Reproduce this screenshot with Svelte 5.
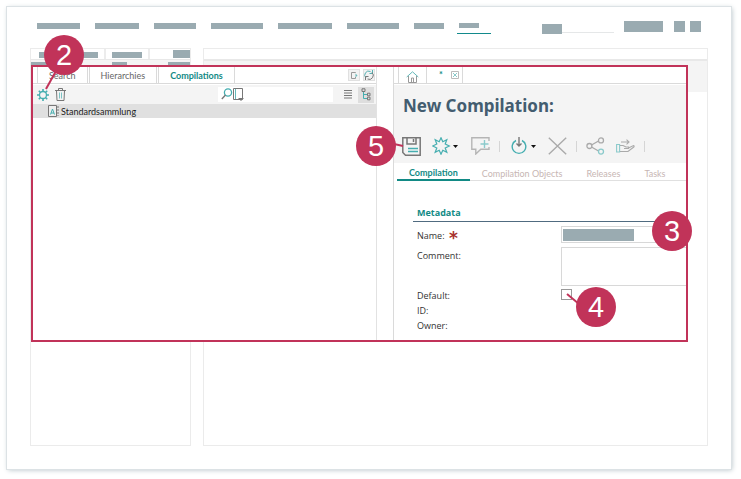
<script>
    const navItems = [43, 44, 42, 52, 54, 52, 30];
    const treeTabs = ["Search", "Hierarchies", "Compilations"];
    const detailTabs = ["Compilation", "Compilation Objects", "Releases", "Tasks"];

    let activeTree = "Compilations";
    let activeDetail = "Compilation";
    let comment = "";
    let isDefault = false;
</script>

<div class="page">
    <header class="nav">
        {#each navItems as width}
            <span class="bar" style="width: {width}px"></span>
        {/each}
        <span class="current"><span class="bar"></span></span>
        <span class="find"><span class="block"></span></span>
        <span class="block wide"></span>
        <span class="block small"></span>
        <span class="block small last"></span>
    </header>

    <div class="back">
        <div class="back-left">
            <div class="back-tabs">
                <span class="back-tab first"><i class="bar"></i></span>
                <span class="back-tab second"><i class="bar"></i></span>
                <i class="block end"></i>
            </div>
            <div class="back-tools">
                <i class="bar a"></i><i class="bar b"></i><i class="bar c"></i>
            </div>
        </div>
        <div class="back-right">
            <div class="back-head"></div>
        </div>
    </div>

    <main class="window">
        <section class="tree">
            <div class="tabs">
                {#each treeTabs as tab}
                    <button class="tab" class:active={tab === activeTree} on:click={() => (activeTree = tab)}>{tab}</button>
                {/each}
                <div class="tab-tools">
                    <button class="mini" aria-label="Detach">
                        <svg width="12" height="12" viewBox="0 0 12 12" fill="none"><path d="M7.500 4V3.500h-4v6h4V8" stroke="#999"/><path d="M7.500 4.500v4L9.500 6.500z" fill="#6bb9ba"/></svg>
                    </button>
                    <button class="mini" aria-label="Refresh">
                        <svg width="12" height="12" viewBox="0 0 12 12" fill="none"><path d="M3 9a4 4 0 0 1 4.500-6.500M9.500 1v3.500h-3" stroke="#55b0b2"/><path d="M9 3.500a4 4 0 0 1-4.500 6.500M2.500 11V7.500h3" stroke="#777"/></svg>
                    </button>
                </div>
            </div>
            <div class="tools">
                <span class="anchor">
                    <button class="icon" aria-label="Settings">
                        <svg width="12" height="12" viewBox="0 0 12 12" fill="none" stroke="#45aeb0"><circle cx="6" cy="6" r="3.500" stroke-width="1.300"/><path d="M6 0v2.500M6 9.500V12M0 6h2.500M9.500 6H12M1.800 1.800l1.700 1.700M8.500 8.500l1.700 1.700M10.200 1.800L8.500 3.500M3.500 8.500l-1.700 1.700" stroke-width="1.600"/></svg>
                    </button>
                    <svg class="line two" width="12" height="20" viewBox="0 0 12 20"><path d="M1 19L11 1"/></svg>
                    <b class="callout c2">2</b>
                </span>
                <button class="icon" aria-label="Delete">
                    <svg width="11" height="13" viewBox="0 0 11 13" fill="none" stroke="#777"><path d="M0 2.500h11M3.500 2V.5h4V2M1.500 3l.5 9.500h7L9.500 3"/><path d="M4.500 4.500v6M6.500 4.500v6" stroke="#7cc3c4"/></svg>
                </button>
                <div class="search">
                    <svg width="23" height="15" viewBox="0 0 23 15" fill="none"><circle cx="7" cy="5.500" r="3.600" stroke="#45aeb0" stroke-width="1.300"/><path d="M4.500 8L.8 12" stroke="#777" stroke-width="1.400"/><path d="M12.500 1.500h9v11h-9z" stroke="#777"/><path d="M14.500 2v10" stroke="#65b9ba"/><path d="M17 11h6l-3 3z" fill="#777"/></svg>
                    <input type="search" aria-label="Search" />
                </div>
                <button class="icon list" aria-label="List view">
                    <svg width="8" height="9" viewBox="0 0 8 9" stroke="#777"><path d="M0 .5h8M0 3h8M0 5.500h8M0 8h8"/></svg>
                </button>
                <button class="icon treeview" aria-label="Tree view">
                    <svg width="10" height="13" viewBox="0 0 10 13" fill="none"><path d="M2.500 4v6.500H6M2.500 6.500H6" stroke="#45aeb0"/><path d="M1 .8h3v2.700H1zM6.500 5.200H9v2.600H6.500zM6.500 9.200H9v2.600H6.500z" stroke="#777"/></svg>
                </button>
            </div>
            <div class="node">
                <svg width="11" height="12" viewBox="0 0 11 12" fill="none"><path d="M.5.5h8v11h-8z" stroke="#777" fill="#eee"/><path d="M2.500 9.500L4.500 4l2 5.500M3 8h3" stroke="#45aeb0"/><path d="M10 1v10" stroke="#777" stroke-dasharray="2 1"/></svg>
                <span>Standardsammlung</span>
            </div>
        </section>

        <section class="detail">
            <div class="tabs">
                <button class="tab home" aria-label="Home">
                    <svg width="13" height="12" viewBox="0 0 13 12" fill="none"><path d="M.7 6L6.500.8 12.300 6" stroke="#65b9ba"/><path d="M2.500 5v6.500h8V5M5.500 11V7h2v4" stroke="#999"/></svg>
                </button>
                <div class="tab doc">
                    <span>*</span>
                    <button class="close" aria-label="Close tab">
                        <svg width="8" height="8" viewBox="0 0 8 8" fill="none"><path d="M.5.5h7v7h-7z" stroke="#bbb"/><path d="M2 2l4 4M6 2L2 6" stroke="#8bcacb"/></svg>
                    </button>
                </div>
            </div>
            <div class="head">
                <h1>New Compilation:</h1>
                <div class="actions">
                    <span class="anchor">
                        <button class="icon" aria-label="Save">
                            <svg width="19" height="19" viewBox="0 0 19 19" fill="none" stroke="#777" stroke-width="1.500"><path d="M.8.8h17.400v17.400H3.500L.8 15.500z"/><path d="M5 1v6h9V1M11.500 2v3"/><path d="M6 11.500h10M6 14.500h10" stroke="#45aeb0"/></svg>
                        </button>
                        <svg class="line five" width="10" height="6" viewBox="0 0 10 6"><path d="M0 2l9 2"/></svg>
                        <b class="callout c5">5</b>
                    </span>
                    <button class="icon drop" aria-label="New">
                        <svg width="26" height="18" viewBox="0 0 26 18" fill="none"><path d="M9 .8l1.800 4 4-2-1.600 4.200L17.300 9l-4.100 2 1.600 4.200-4-2L9 17.200l-1.800-4-4 2L4.800 11 .7 9l4.100-2-1.600-4.200 4 2z" stroke="#45aeb0" stroke-width="1.200"/><path d="M21 8h5l-2.500 3z" fill="#111"/></svg>
                    </button>
                    <button class="icon note" aria-label="Add comment">
                        <svg width="19" height="18" viewBox="0 0 19 18" fill="none"><path d="M18 4V.8H.8v11.500h4V17l5-4.700H18V10" stroke="#b5b5b5" stroke-width="1.400"/><path d="M13.500 3v8M9.500 7h8" stroke="#8bcacb" stroke-width="1.400"/></svg>
                    </button>
                    <i class="sep"></i>
                    <button class="icon drop" aria-label="Check in">
                        <svg width="26" height="18" viewBox="0 0 26 18" fill="none"><path d="M5 3.500a6.800 6.800 0 1 0 6 0" stroke="#45aeb0" stroke-width="1.400"/><path d="M8 0v9M5.500 6.500L8 9l2.500-2.500" stroke="#777" stroke-width="1.400"/><path d="M20 8h5l-2.500 3z" fill="#111"/></svg>
                    </button>
                    <button class="icon cancel" aria-label="Cancel">
                        <svg width="19" height="18" viewBox="0 0 19 18" fill="none" stroke="#aaa" stroke-width="1.400"><path d="M.8.8l17.400 16.400M18.200.8L.8 17.200"/></svg>
                    </button>
                    <i class="sep"></i>
                    <button class="icon share" aria-label="Share">
                        <svg width="19" height="18" viewBox="0 0 19 18" fill="none" stroke="#aaa" stroke-width="1.300"><path d="M5.500 8l7-4M5.500 10l7 4"/><circle cx="3.400" cy="9" r="2.500"/><circle cx="15" cy="3.400" r="2.500"/><circle cx="15" cy="14.600" r="2.500" stroke="#8bcacb"/></svg>
                    </button>
                    <button class="icon hand" aria-label="Hand over">
                        <svg width="19" height="14" viewBox="0 0 19 14" fill="none" stroke="#aaa" stroke-width="1.100"><path d="M5 3h8M10.500.7L13 3l-2.500 2.300M4 6.500h3l3 1.500h2.500v1.500H8M12.500 9l5-2.500c1 .5.700 1.200 0 1.700L12 12.500H4"/><path d="M.6 5.500h3v7.500h-3z" stroke="#8bcacb"/></svg>
                    </button>
                    <i class="sep"></i>
                </div>
            </div>
            <nav class="subtabs">
                {#each detailTabs as tab}
                    <button class:active={tab === activeDetail} on:click={() => (activeDetail = tab)}>{tab}</button>
                {/each}
            </nav>
            <form class="form">
                <h2>Metadata</h2>
                <div class="row name">
                    <label for="name">Name: <em>*</em></label>
                    <span class="anchor">
                        <input id="name" type="text" />
                        <b class="callout c3">3</b>
                    </span>
                </div>
                <div class="row comment">
                    <label for="comment">Comment:</label>
                    <textarea id="comment" bind:value={comment}></textarea>
                </div>
                <div class="row">
                    <label for="default">Default:</label>
                    <span class="anchor check">
                        <input id="default" type="checkbox" bind:checked={isDefault} />
                        <svg class="line four" width="14" height="12" viewBox="0 0 14 12"><path d="M1 1l12 10"/></svg>
                        <b class="callout c4">4</b>
                    </span>
                </div>
                <div class="row"><span>ID:</span></div>
                <div class="row"><span>Owner:</span></div>
            </form>
        </section>
    </main>
</div>

<style>
    :global(body) {
        background: #fff;
    }

    .page, .page * {
        box-sizing: border-box;
    }

    .page {
        position: relative;
        display: flex;
        flex-direction: column;
        min-height: calc(100vh - 17px);
        margin: 7px 10px 10px 7px;
        padding: 14px 23px 23px 23px;
        background: #fff;
        box-shadow: 0 0 0 1px #dce2e5, 1px 1px 5px #b4c1c6;
        font-family: "Open Sans", "Noto Sans", sans-serif;
        font-size: 9px;
        line-height: 15px;
        color: #333;
    }

    button, input, textarea {
        margin: 0;
        padding: 0;
        border: 0;
        background: none;
        font: inherit;
        color: inherit;
    }

    svg {
        display: block;
    }

    .bar, .block {
        display: block;
        flex: none;
        height: 6px;
        background: #9aabb1;
    }

    .nav {
        display: flex;
        gap: 15px;
        height: 14px;
        margin-bottom: 13px;
        padding: 0 7px;
    }

    .nav > .bar {
        margin-top: 2px;
    }

    .current {
        width: 34px;
        height: 13px;
        margin-left: -2px;
        padding: 2px 2px 0;
        border-bottom: 1px solid #128a8c;
    }

    .current .bar {
        width: 20px;
        height: 5px;
    }

    .find {
        width: 72px;
        height: 12px;
        margin-left: auto;
        border-bottom: 1px solid #e5e7e8;
    }

    .find .block {
        width: 20px;
        height: 10px;
        margin-top: 3px;
    }

    .nav > .block {
        height: 11px;
    }

    .nav > .wide {
        width: 39px;
        margin-left: -5px;
    }

    .nav > .small {
        width: 11px;
        margin-left: -4px;
    }

    .nav > .last {
        margin-left: -10px;
    }

    .back {
        display: grid;
        flex: 1;
        grid-template-columns: 161fr 506fr;
        gap: 12px;
    }

    .back-left, .back-right {
        border: 1px solid #ebebeb;
    }

    .back-tabs {
        display: flex;
        height: 11px;
        padding-left: 2px;
        background: #fff;
        border-bottom: 1px solid #e8e8e8;
    }

    .back-tab {
        padding: 3px 6px 0;
        border-right: 2px solid #ececec;
    }

    .first .bar {
        width: 59px;
    }

    .second .bar {
        width: 30px;
    }

    .end {
        width: 17px;
        height: 8px;
        margin: 1px 0 0 auto;
    }

    .back-tools {
        display: flex;
        justify-content: space-between;
        height: 10px;
        padding-top: 2px;
        background: #f4f4f4;
    }

    .a {
        width: 40px;
    }

    .b {
        width: 15px;
    }

    .c {
        width: 22px;
    }

    .back-head {
        height: 33px;
        margin-top: 10px;
        border-top: 2px solid #e8e8e8;
        background: #f4f4f4;
    }

    .window {
        position: absolute;
        top: 58px;
        left: 24px;
        right: 43px;
        display: grid;
        grid-template-columns: 344fr 293fr;
        gap: 16px;
        border: 2px solid #c13359;
        background: #fff;
    }

    .tree {
        min-width: 0;
        border-right: 1px solid #e2e2e2;
    }

    .detail {
        min-width: 0;
        border-left: 1px solid #dadada;
    }

    .tabs, .node, .subtabs {
        font-family: "Liberation Sans Narrow", Lato, sans-serif;
    }

    .tabs {
        display: flex;
        height: 17px;
        margin-bottom: 1px;
        padding-left: 4px;
        border-bottom: 1px solid #dadada;
    }

    .tab {
        height: 16px;
        margin-right: 1px;
        padding: 0 11px;
        border-left: 1px solid #dadada;
        border-right: 1px solid #dadada;
        color: #666;
    }

    .tab.active {
        font-weight: bold;
        color: #128a85;
    }

    .tab-tools {
        display: flex;
        gap: 3px;
        margin: 2px 1px 0 auto;
    }

    .mini {
        width: 12px;
        height: 12px;
        background: #f2f2f2;
        outline: 1px solid #e0e0e0;
        outline-offset: -1px;
    }

    .tools {
        display: flex;
        align-items: center;
        gap: 6px;
        height: 19px;
        padding: 0 2px 0 4px;
        background: #f4f4f4;
    }

    .anchor {
        position: relative;
        display: block;
    }

    .icon {
        display: flex;
        align-items: center;
        justify-content: center;
        flex: none;
    }

    .search {
        display: flex;
        align-items: center;
        width: 115px;
        height: 15px;
        margin-left: auto;
        background: #fff;
    }

    .search svg {
        flex: none;
        margin-left: 3px;
    }

    .search input {
        flex: 1;
        min-width: 0;
    }

    .list {
        margin-left: 5px;
    }

    .treeview {
        width: 16px;
        height: 16px;
        background: #dedede;
    }

    .node {
        display: flex;
        align-items: center;
        gap: 2px;
        height: 14px;
        padding-left: 15px;
        background: #e0e0e0;
        color: #222;
    }

    .home {
        padding: 3px 7px 0;
    }

    .doc {
        display: flex;
        gap: 8px;
        padding: 0 3px 0 11px;
        border-left: 0;
        color: #128a85;
        font-weight: bold;
    }

    .close {
        align-self: center;
    }

    .head {
        height: 78px;
        padding: 9px 8px 0;
        background: #f4f4f4;
    }

    h1 {
        margin: 0;
        padding-left: 1px;
        font: bold 17px/24px "Noto Sans", sans-serif;
        color: #435d70;
    }

    .actions {
        display: flex;
        align-items: center;
        height: 20px;
        margin-top: 18px;
    }

    .drop {
        margin-left: 11px;
    }

    .note {
        margin-left: 13px;
    }

    .sep {
        width: 1px;
        height: 11px;
        margin-left: 9px;
        background: #d5d5d5;
    }

    .cancel {
        margin-left: 11px;
    }

    .share {
        margin-left: 9px;
    }

    .hand {
        margin-left: 11px;
    }

    .subtabs {
        display: flex;
        height: 18px;
        margin-left: 3px;
        border-bottom: 1px solid #e0e0e0;
    }

    .subtabs button {
        height: 18px;
        padding: 3px 12px 0;
        line-height: 14px;
        color: #c7b6b3;
        white-space: nowrap;
    }

    .subtabs .active {
        border-bottom: 2px solid #128a85;
        font-weight: bold;
        color: #128a85;
    }

    .form {
        padding: 24px 0 7px 19px;
    }

    h2 {
        margin: 0 0 4px;
        padding-left: 4px;
        border-bottom: 1px solid #506b80;
        font-size: 9px;
        line-height: 16px;
        color: #128a85;
    }

    .row {
        display: grid;
        grid-template-columns: 144px 1fr;
        min-height: 15px;
        padding-left: 4px;
    }

    .row label {
        padding-top: 1px;
    }

    .row.name label {
        padding-top: 2px;
    }

    em {
        display: inline-block;
        height: 14px;
        padding-left: 2px;
        font: bold 17px/20px "DejaVu Sans", sans-serif;
        vertical-align: top;
        color: #a8322d;
    }

    .name, .comment {
        margin-bottom: 4px;
    }

    .name input, textarea {
        display: block;
        width: 100%;
        height: 17px;
        border: 1px solid #d8d8d8;
        border-right: 0;
        border-radius: 0;
    }

    .name input {
        padding-left: 76px;
        background: linear-gradient(#9aabb1, #9aabb1) 1px 2px / 71px 12px no-repeat;
    }

    textarea {
        height: 39px;
        resize: none;
    }

    .comment {
        margin-bottom: 1px;
    }

    .check input {
        display: block;
        appearance: none;
        width: 11px;
        height: 11px;
        margin-top: 2px;
        border: 1px solid #999;
    }

    .callout {
        position: absolute;
        z-index: 2;
        width: 40px;
        height: 40px;
        border-radius: 50%;
        background: #c13359;
        font: 29px/41px "Liberation Sans", sans-serif;
        text-align: center;
        color: #fff;
    }

    .line {
        position: absolute;
        z-index: 2;
        stroke: #c13359;
        stroke-width: 2;
    }

    .c2 {
        left: 7px;
        top: -54px;
    }

    .two {
        left: 8px;
        top: -19px;
    }

    .c3 {
        right: -6px;
        top: -15px;
    }

    .c4 {
        left: 15px;
        top: 0;
    }

    .four {
        left: 5px;
        top: 6px;
    }

    .c5 {
        left: -46px;
        top: -11px;
    }

    .five {
        left: -8px;
        top: 5px;
    }
</style>
